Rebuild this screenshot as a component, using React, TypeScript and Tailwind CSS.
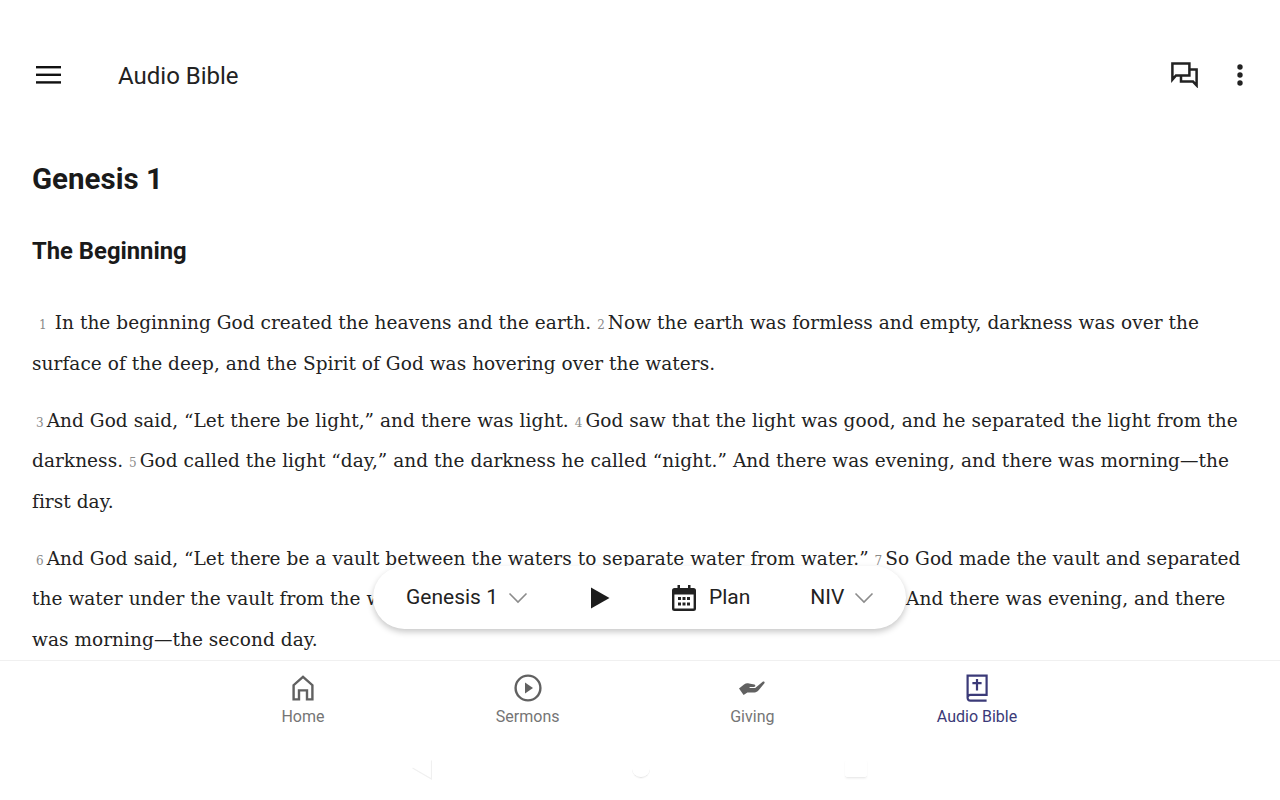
import React from 'react';

const Num: React.FC<{ n: number; className?: string }> = ({ n, className = 'mr-[3px]' }) => (
  <span className={`text-[12px] leading-none tracking-normal text-[#8a8a8a] ${className}`}>{n}</span>
);

const Chevron = () => (
  <svg width="20" height="12" viewBox="0 0 20 12" fill="none" stroke="#8c8c8c" strokeWidth="1.6">
    <path d="M1.5 1.5 10 10l8.5-8.5" />
  </svg>
);

const NavItem: React.FC<{ label: string; active?: boolean; children: React.ReactNode }> = ({ label, active, children }) => (
  <div className="w-[224.7px] flex flex-col items-center">
    <div className="h-[32px] flex items-center justify-center">{children}</div>
    <span className={`mt-[3px] text-[16px] leading-[20px] ${active ? 'text-[#3b3a78]' : 'text-[#757575]'}`}>{label}</span>
  </div>
);

export default function App() {
  return (
    <div className="relative w-[1280px] h-[800px] overflow-hidden bg-white font-['Roboto',sans-serif] text-[#1a1a1a] flex flex-col">
      {/* Toolbar */}
      <header className="h-[125px] shrink-0 pt-[50px] pl-[36px] pr-[37px]">
        <div className="h-[50px] flex items-center">
          <svg width="25" height="18" viewBox="0 0 25 18" fill="#111">
            <rect y="0" width="25" height="2.4" />
            <rect y="7.6" width="25" height="2.4" />
            <rect y="15.2" width="25" height="2.4" />
          </svg>
          <h1 className="ml-[57px] pt-[2px] text-[24px] leading-[32px] font-normal text-[#222]">Audio Bible</h1>
          <svg className="ml-auto" width="27" height="26" viewBox="0 0 27 26" fill="none" stroke="#222" strokeWidth="2.5">
            <path d="M1.4 17.6V1.4h17v12H5z" />
            <path d="M18.4 7.4h7.2v16l-3.6-3.8H10v-6.2" />
          </svg>
          <svg className="ml-[39px]" width="6" height="22" viewBox="0 0 6 22" fill="#222">
            <circle cx="3" cy="3" r="2.7" />
            <circle cx="3" cy="11" r="2.7" />
            <circle cx="3" cy="19" r="2.7" />
          </svg>
        </div>
      </header>

      {/* Scripture */}
      <main className="flex-1 min-h-0 overflow-hidden pl-[32px] whitespace-nowrap">
        <h2 className="mt-[34px] text-[29.5px] leading-[40px] font-bold text-[#1a1a1a]">Genesis 1</h2>
        <h3 className="mt-[36px] text-[23.8px] leading-[32px] font-bold text-[#1a1a1a]">The Beginning</h3>
        <div className="mt-[36px] font-['DejaVu_Serif',serif] text-[18.5px] leading-[40.5px] tracking-[0.05px] text-[#222]">
          <p className="mb-[16.5px]">
            <Num n={1} className="ml-[7px] mr-[8px]" />In the beginning God created the heavens and the earth. <Num n={2} />Now the earth was formless and empty, darkness was over the<br />
            surface of the deep, and the Spirit of God was hovering over the waters.
          </p>
          <p className="mb-[16.5px]">
            <Num n={3} className="ml-[4px] mr-[3px]" />And God said, “Let there be light,” and there was light. <Num n={4} />God saw that the light was good, and he separated the light from the<br />
            darkness. <Num n={5} />God called the light “day,” and the darkness he called “night.” And there was evening, and there was morning—the<br />
            first day.
          </p>
          <p>
            <Num n={6} className="ml-[4px] mr-[3px]" />And God said, “Let there be a vault between the waters to separate water from water.” <Num n={7} />So God made the vault and separated<br />
            the water under the vault from the water above it. And it was so. God called the vault “sky.” And there was evening, and there<br />
            was morning—the second day.
          </p>
        </div>
      </main>

      {/* Floating player pill */}
      <div className="absolute left-[373px] top-[566px] w-[533px] h-[63px] rounded-full bg-white shadow-[0_3px_6px_rgba(0,0,0,0.22)] flex items-center pl-[33px] text-[21px] text-[#222]">
        <span className="pt-[1px]">Genesis 1</span>
        <span className="ml-[10px]"><Chevron /></span>
        <svg className="ml-[62px]" width="20" height="24" viewBox="0 0 20 24" fill="#1c1c1c">
          <path d="M1 1.5v21L19.5 12z" />
        </svg>
        <svg className="ml-[62px]" width="24" height="26" viewBox="0 0 24 26" fill="#222">
          <path d="M5.5 0H8v3h8V0h2.5v3h3A2.5 2.5 0 0 1 24 5.5v18a2.5 2.5 0 0 1-2.5 2.5h-19A2.5 2.5 0 0 1 0 23.500v-18A2.500 2.500 0 0 1 2.500 3h3zM2.400 9.400v14.200h19.200V9.400z" />
          <rect x="6" y="12" width="3" height="3" /><rect x="10.500" y="12" width="3" height="3" /><rect x="15" y="12" width="3" height="3" />
          <rect x="6" y="17.500" width="3" height="3" /><rect x="10.500" y="17.500" width="3" height="3" /><rect x="15" y="17.500" width="3" height="3" />
        </svg>
        <span className="ml-[13px] pt-[1px]">Plan</span>
        <span className="ml-[60px] pt-[1px]">NIV</span>
        <span className="ml-[10px]"><Chevron /></span>
      </div>

      {/* Bottom navigation */}
      <nav className="h-[140px] shrink-0 border-t border-[#f0f0f0] pt-[11px] flex justify-center items-start">
        <NavItem label="Home">
          <svg width="24" height="26" viewBox="0 0 24 26" fill="none" stroke="#616161" strokeWidth="2.4">
            <path d="M2.600 24.400V10.200L12 1.800l9.400 8.400v14.200h-5.400v-9H8v9z" />
          </svg>
        </NavItem>
        <NavItem label="Sermons">
          <svg width="28" height="28" viewBox="0 0 28 28" fill="none">
            <circle cx="14" cy="14" r="12.400" stroke="#616161" strokeWidth="2.400" />
            <path d="M11 8.600v10.800l8-5.400z" fill="#616161" />
          </svg>
        </NavItem>
        <NavItem label="Giving">
          <svg width="26" height="14" viewBox="0 0 26 14" fill="#616161">
            <path d="M0 7.500 5 3.400C6.600 2.200 8.400 2 10 2.400l5.400 1.200c1.400.4 1.200 2.400-.4 2.400h-4.400v1h5.600L24 0.600c1-.6 2.200.6 1.400 1.600l-6 7.400c-1 1.200-2.200 1.800-3.800 1.800H8.400L4.600 14z" />
          </svg>
        </NavItem>
        <NavItem label="Audio Bible" active>
          <svg width="24" height="28" viewBox="0 0 24 28" fill="none" stroke="#3b3a78" strokeWidth="2.200">
            <path d="M2.600 24V1.600h19v19.200H5.400a2.800 2.800 0 0 0-2.800 3.200 2.800 2.800 0 0 0 2.800 2.600h16.200" />
            <path d="M12 5v11.500M7.400 9.200h9.200" />
          </svg>
        </NavItem>
      </nav>

      {/* Faint system nav buttons */}
      <div className="absolute left-[412px] top-[760px] w-[455px] flex items-start justify-between">
        <svg width="20" height="20" viewBox="0 0 20 20" fill="none" stroke="#f0f0f0" strokeWidth="1.200">
          <path d="M0.500 8 19.500 19V0.500" />
        </svg>
        <div className="ml-[5px] w-[18px] h-[18px] rounded-full border-b border-[#e6e6e6] shadow-[0_1px_1px_rgba(0,0,0,0.03)]" />
        <div className="w-[22px] h-[18px] rounded-[3px] border-b border-[#ececec] shadow-[0_1px_2px_rgba(0,0,0,0.05)]" />
      </div>
    </div>
  );
}
